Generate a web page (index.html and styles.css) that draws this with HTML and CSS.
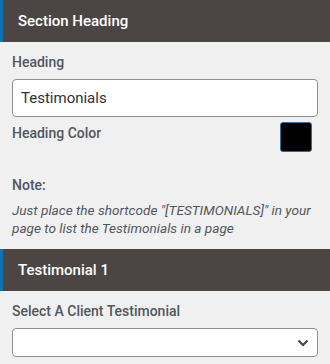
FILE: index.html
```html
<!DOCTYPE html>
<html>
<head>
<meta charset="utf-8">
<link rel="stylesheet" href="styles.css">
</head>
<body>
<div class="panel">
  <div class="section-head">Section Heading</div>
  <div class="section-body">
    <div class="label">Heading</div>
    <input class="text-input" type="text" value="Testimonials">
    <div class="color-row">
      <div class="label">Heading Color</div>
      <div class="swatch"></div>
    </div>
    <div class="note">
      <div class="label">Note:</div>
      <p class="note-text">Just place the shortcode "[TESTIMONIALS]" in your page to list the Testimonials in a page</p>
    </div>
  </div>
  <div class="section-head">Testimonial 1</div>
  <div class="section-body">
    <div class="label">Select A Client Testimonial</div>
    <div class="select">
      <svg class="chev" width="12" height="8" viewBox="0 0 12 8"><path d="M1.5 1.5 L6 6 L10.5 1.5" fill="none" stroke="#3c434a" stroke-width="2"/></svg>
    </div>
  </div>
  <div class="section-head"></div>
</div>
</body>
</html>
```
FILE: styles.css
```css
html, body {
  margin: 0;
  padding: 0;
  background: #f0f0f0;
}
body {
  font-family: Roboto, "Noto Sans", sans-serif;
  width: 330px;
  height: 364px;
  overflow: hidden;
}
.panel {
  display: flex;
  flex-direction: column;
}
.section-head {
  height: 42px;
  flex-shrink: 0;
  background: #4b4644;
  border-left: 3px solid #0a74b3;
  color: #ffffff;
  font-weight: 500;
  font-size: 15px;
  line-height: 42px;
  padding-left: 15px;
  box-sizing: border-box;
}
.section-body {
  padding: 11px 12px 0 12px;
  display: flex;
  flex-direction: column;
}
.label {
  color: #50575e;
  font-weight: 500;
  font-size: 14px;
  line-height: 18px;
}
.text-input {
  margin-top: 8px;
  height: 38px;
  width: 306px;
  box-sizing: border-box;
  border: 1px solid #8c8f94;
  border-radius: 4px;
  background: #ffffff;
  font-family: Roboto, sans-serif;
  font-size: 15px;
  color: #2c3338;
  padding: 0 12px 0 8px;
  outline: none;
}
.color-row {
  display: flex;
  justify-content: space-between;
  align-items: flex-start;
  margin-top: 5px;
  padding-right: 6px;
}
.color-row .label {
  margin-top: 2px;
}
.swatch {
  width: 32px;
  height: 30px;
  box-sizing: border-box;
  background: #000000;
  border: 1px solid #3c6a94;
  border-radius: 3px;
}
.note {
  margin-top: 24px;
}
.note-text {
  margin: 7px -12px 12px 0;
  font-style: italic;
  font-size: 13.6px;
  line-height: 18px;
  color: #50575e;
}
.select {
  margin-top: 8px;
  height: 29px;
  width: 306px;
  box-sizing: border-box;
  border: 1px solid #8c8f94;
  border-radius: 4px;
  background: #ffffff;
  display: flex;
  align-items: center;
  justify-content: flex-end;
  padding-right: 8px;
  margin-bottom: 7px;
}
```
